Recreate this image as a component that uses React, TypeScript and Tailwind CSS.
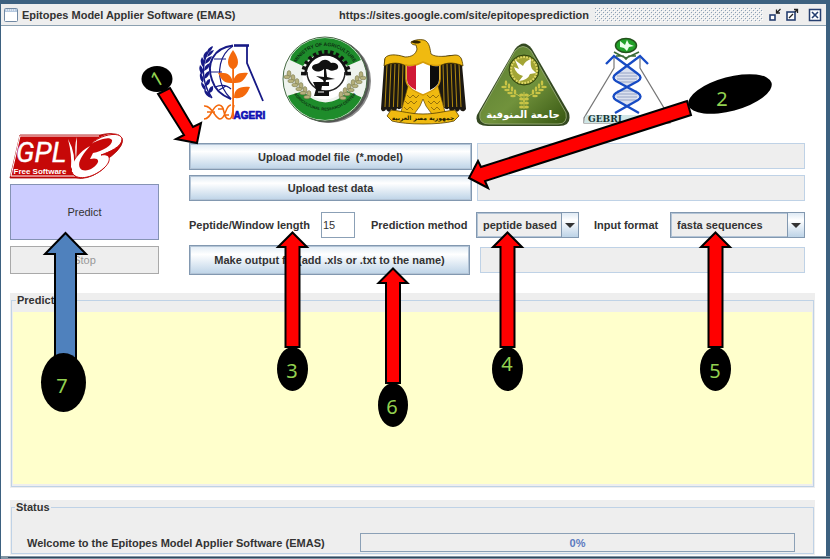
import type { ReactNode } from "react";

const navy = "#171a86";

function AgeriLogo() {
  return (
    <svg viewBox="198 36 70 92" className="h-[92px] w-[70px] shrink-0" aria-label="AGERI logo">
      <g fill="none" stroke={navy} strokeWidth="1.6">
        <path d="M233 45.5 C213 48 206 64 212 80 C215 90 223 96 231 99" strokeWidth="2" />
        <path d="M233 46 C220 54 216 72 223 88 C226 94 229 97 231 99" strokeWidth="1.2" />
        <path d="M214 59 H226 M211 72 H222 M215 87 C222 84 227 85 231 89 M219 90 L226 86" strokeWidth="1.2" />
        <path d="M234 45.5 H249" strokeWidth="2.6" />
        <path d="M247 46 V63 L263 101" strokeWidth="1.8" />
        <path d="M212 47 C200 60 201 82 212 98" strokeWidth="1.4" />
      </g>
      <g fill={navy}>
        <path d="M207 53 Q207 48 213 46 Q212 51 207 53Z M204 60 Q202 54 207 51 Q208 57 204 60Z M203 67 Q199 62 202 57 Q206 62 203 67Z M202 75 Q198 70 200 65 Q205 69 202 75Z M203 83 Q199 79 200 73 Q205 77 203 83Z M206 91 Q201 88 201 82 Q206 85 206 91Z M211 98 Q205 96 204 90 Q210 92 211 98Z" />
        <path d="M207 57 Q212 55 214 50 Q208 51 207 57Z M205 64 Q211 61 212 56 Q205 58 205 64Z M204 71 Q210 68 210 63 Q204 65 204 71Z M204 79 Q210 77 209 71 Q204 73 204 79Z M206 86 Q211 84 210 79 Q205 80 206 86Z M209 93 Q214 92 213 86 Q208 87 209 93Z" />
      </g>
      <g fill="#f4690c">
        <path d="M233 50 C240 60 239 66 234 69 H232 C227 66 226 60 233 50Z" />
        <path d="M233 83 C223 84 221 78 218 73 C227 72 232 75 233 83Z M233 83 C243 84 245 78 248 73 C238 72 234 75 233 83Z" />
        <path d="M234 98 C234 89 239 86 250 87 C247 94 244 99 234 98Z" />
        <path d="M232.200 68 H234 V119 H232.200Z" />
      </g>
      <path d="M204 119 C212 119 212 105 219 105 C226 105 222 119 229 119 C233 119 232 112 234 105 M204 106 C212 105 215 119 220 119 C226 119 225 105 231 105 M207 112 H215 M218 109 H224 M224 115 H229" fill="none" stroke="#f4690c" strokeWidth="1.5" />
      <text x="233.500" y="119" fontSize="10" fontWeight="900" fill="#1010b4" stroke="#1010b4" strokeWidth=".7" fontFamily="Liberation Sans, sans-serif">AGERI</text>
    </svg>
  );
}

function MinistryLogo() {
  const teeth = Array.from({ length: 13 }, (_, i) => Math.PI * (1.02 + (0.96 * i) / 12));
  const grains = [0, 1, 2, 3, 4, 5];
  return (
    <svg viewBox="282 36 92 92" className="h-[92px] w-[92px] shrink-0" aria-label="Ministry of Agriculture logo">
      <defs>
        <clipPath id="disc"><circle cx="325" cy="79" r="41" /></clipPath>
        <path id="arcTop" d="M292 79 A33 33 0 0 1 358 79" />
        <path id="arcLow" d="M288 79 A37.500 37.500 0 0 0 362 79" />
      </defs>
      <circle cx="329" cy="81" r="42" fill="#8b8b8b" />
      <circle cx="327" cy="80" r="42.500" fill="#555" />
      <circle cx="325" cy="79" r="42" fill="#eef3ee" stroke="#476b45" strokeWidth="1" />
      <g clipPath="url(#disc)">
        <path d="M290 60 L300 30 H350 L361 60 L347 66 A26 26 0 0 0 303 66Z" fill="#1e8c2b" />
        <path d="M287 96 L304 91 A26 26 0 0 0 347 91 L363 98 L350 128 H300Z" fill="#1e8c2b" />
      </g>
      <circle cx="325" cy="77" r="22.500" fill="#fff" />
      <g stroke="#111" strokeWidth="3.400">
        {teeth.map((a) => (
          <line key={a} x1={326 + 20 * Math.cos(a)} y1={75 + 20 * Math.sin(a)} x2={326 + 25 * Math.cos(a)} y2={75 + 25 * Math.sin(a)} />
        ))}
      </g>
      <path d="M305.500 75 A20.500 20.500 0 0 1 346.500 75" fill="none" stroke="#111" strokeWidth="2.500" />
      <path d="M307 72 A19 19 0 0 0 345 72" fill="none" stroke="#222" strokeWidth="1.500" />
      <path d="M312 68 C312 63 318 65 320 62 C324 58 329 60 331 63 C338 61 341 69 335 70 C330 72 329 69 326 69 L327 77 L335 79 L326 80 L325 86 L323 80 L316 76 L324 77 L324 69 C319 73 314 72 312 68Z" fill="#111" />
      <path d="M313 82 H329 V86 H322 L321 91 H329 V96 H314 L316 89Z" fill="#111" />
      <path d="M318 92 H324" stroke="#fff" />
      <g fill="#b5b07c" stroke="#6f7048" strokeWidth=".5">
        {grains.map((i) => (
          <g key={i}>
            <ellipse cx={289 + i * 4} cy={74 + i * 4} rx="2" ry="3.400" />
            <ellipse cx={287 + i * 4} cy={77 + i * 4} rx="3.200" ry="1.800" />
            <ellipse cx={361 - i * 4} cy={75 + i * 4} rx="2" ry="3.400" />
            <ellipse cx={363 - i * 4} cy={78 + i * 4} rx="3.200" ry="1.800" />
          </g>
        ))}
      </g>
      <g fontFamily="Liberation Sans, sans-serif" fontWeight="700" fontSize="5" fill="#0d3012">
        <text><textPath href="#arcTop" startOffset="50%" textAnchor="middle">MINISTRY OF AGRICULTURE</textPath></text>
        <text fontSize="4"><textPath href="#arcLow" startOffset="50%" textAnchor="middle">AGRICULTURAL RESEARCH CENTER</textPath></text>
      </g>
    </svg>
  );
}

function EagleLogo() {
  const gold = "#f0ba10";
  const feathers = [0, 1, 2, 3, 4];
  return (
    <svg viewBox="380 36 90 92" className="h-[92px] w-[90px] shrink-0" aria-label="Coat of arms of Egypt">
      <path d="M405 57 C394 54 387 55 384.500 59 L381 109 C382 113 386 111 386 109 C388 113 391 112 391 109 C393 113 397 111 397 108 C399 111 403 108 403 104 L409 91Z" fill="#1c1811" />
      <path d="M441 57 C452 54 459 55 461.500 59 L466 109 C464 113 460 111 460 109 C458 113 455 112 455 109 C453 113 449 111 449 108 C447 111 443 108 443 104 L437 91Z" fill="#1c1811" />
      {feathers.map((i) => (
        <g key={i} stroke={gold} strokeWidth=".7" fill="none">
          <path d={`M${387 + i * 4} 64 L${385 + i * 4.2} 107`} />
          <path d={`M${459 - i * 4} 64 L${461 - i * 4.2} 107`} />
        </g>
      ))}
      <path d="M408 86 L401 112 L412 117 L420 106 L423 99 L426 106 L434 117 L445 112 L438 86Z" fill={gold} stroke="#5e4300" strokeWidth=".7" />
      <g fill="none" stroke="#82600a" strokeWidth=".8">
        <path d="M407 95 l3 3 3-3 3 3 3-3 M405 101 l3 3 3-3 3 3 3-3 M404 107 l3 3 3-3 3 3 M427 95 l3 3 3-3 3 3 3-3 M428 101 l3 3 3-3 3 3 3-3 M431 107 l3 3 3-3 3 3" />
      </g>
      <path d="M385 58 C388 54 396 54 405 57 C412 57 416 54 417 49 L416 45 C413 45 411 44 411 42 C414 40 419 39 424 40 C430 42 430 50 431 54 C436 58 447 56 455 55 C461 55 462 59 463 66 C452 61 444 63 438 67 H408 C400 62 392 62 384 66Z" fill={gold} stroke="#4f3b00" strokeWidth=".8" />
      <path d="M411 42 C413 40 418 40 421 42 C419 44 415 44 411 42Z" fill="#332500" />
      <path d="M406 65 Q414 67 423 62 Q432 67 440 65 V79 C440 88 430 92 423 95 C416 92 406 88 406 79Z" fill="#fff" stroke="#d59c08" strokeWidth="1.500" />
      <path d="M407 66 Q412 67 416 65 V90 C410 87 407 84 407 79Z" fill="#d01936" />
      <path d="M430 65 Q434 67 439 66 V79 C439 84 436 87 430 90Z" fill="#0c0c0c" />
      <path d="M391 110 C402 111 410 114 423 114 C436 114 445 111 455 110 L459 116 L454 121 C440 125 406 125 392 121 L387 116Z" fill={gold} stroke="#574000" strokeWidth=".8" />
      <text x="423" y="120" textAnchor="middle" fontFamily="DejaVu Sans, sans-serif" fontWeight="700" fontSize="6" fill="#221900">جمهورية مصر العربية</text>
    </svg>
  );
}

function MenoufiaLogo() {
  const leaves = [0, 1, 2, 3];
  return (
    <svg viewBox="476 36 96 92" className="h-[92px] w-[96px] shrink-0" aria-label="Menoufia University logo">
      <defs>
        <linearGradient id="olive" x1="0" y1="0" x2="1" y2="1">
          <stop offset="0" stopColor="#587c30" />
          <stop offset=".55" stopColor="#71923c" />
          <stop offset="1" stopColor="#365611" />
        </linearGradient>
      </defs>
      <path d="M515 49 Q524 38 532 49 L569 113 Q572 126 559 126 H488 Q474 126 477 115Z" fill="#344921" />
      <path d="M515 51 Q523 42 531 51 L566 113 Q568 124 558 124 H489 Q478 124 480 113Z" fill="url(#olive)" stroke="#97aa76" strokeWidth=".9" />
      <circle cx="524" cy="70" r="15" fill="#69781a" stroke="#2f410f" />
      <circle cx="524" cy="70" r="13" fill="#a3a536" stroke="#e0d765" strokeWidth="2" strokeDasharray="2 1" />
      <path d="M515 60 L523 66 Q525 61 531 59 Q530 65 532 69 L536 73 L530 74 Q528 80 519 81 L523 76 Q516 74 514 67 L519 69Z" fill="#fff" />
      <g fill="#c9c446">
        {leaves.map((i) => (
          <g key={i}>
            <ellipse cx={506 + i * 3} cy={83 + i * 3} rx="1.300" ry="2.800" />
            <ellipse cx={504 + i * 3} cy={87 + i * 3} rx="2.800" ry="1.300" />
            <ellipse cx={542 - i * 3} cy={83 + i * 3} rx="1.300" ry="2.800" />
            <ellipse cx={544 - i * 3} cy={87 + i * 3} rx="2.800" ry="1.300" />
            <ellipse cx="521.500" cy={95 + i * 4} rx="2.400" ry="1.500" />
            <ellipse cx="526.500" cy={95 + i * 4} rx="2.400" ry="1.500" />
          </g>
        ))}
      </g>
      <path d="M524 92 V109 M514 93 Q523 97 524 102 Q525 97 534 93" stroke="#c9c446" fill="none" />
      <text x="523" y="118" textAnchor="middle" fontFamily="DejaVu Sans, sans-serif" fontWeight="700" fontSize="10" fill="#fff">جامعة المنوفية</text>
    </svg>
  );
}

function GebriLogo() {
  const rungs = [0, 1, 2, 3];
  return (
    <svg viewBox="578 36 95 92" className="h-[92px] w-[95px] shrink-0" aria-label="GEBRI logo">
      <path d="M614 58 V68 L584 118 V123 H670 V118 L640 68 V58" fill="#fff" stroke="#777" strokeWidth="1.200" />
      <path d="M586 115 H668 L670 123 H584Z" fill="#cfe6e6" />
      <path d="M627 67 L640 77 L627 87 L614 77Z M627 87 L640 96 L627 106 L614 96Z" fill="#dbe1ef" />
      <g stroke="#8e9dc0" strokeWidth=".9">
        {rungs.map((i) => (
          <path key={i} d={`M617 ${73 + i * 3} H637 M617 ${91 + i * 3} H637`} />
        ))}
      </g>
      <path d="M606 64 L614 56 L638 74 Q643 77.500 638 81 L616 93 Q611 96.500 616 100 L639 113 M648 64 L640 56 L616 74 Q611 77.500 616 81 L638 93 Q643 96.500 638 100 L615 113" fill="none" stroke="#174bc4" strokeWidth="2.400" />
      <ellipse cx="626" cy="45.500" rx="10.500" ry="7" fill="#21a128" stroke="#24521d" strokeWidth="1.500" />
      <path d="M620 41 L625 45 L627 40 L629 44 L634 46 L629 47 L627 51 L624 48 L620 47Z" fill="#eaffea" />
      <path d="M614 52 Q619 55 626 58 Q633 55 639 52 M616 56 L623 56 L626 59 L629 56 L636 56" fill="none" stroke="#3a6a36" strokeWidth="1.600" />
      <text x="588" y="122" fontFamily="DejaVu Serif, serif" fontWeight="700" fontSize="9" fill="#173535">GEBRI</text>
    </svg>
  );
}

function GplLogo() {
  return (
    <svg viewBox="8 130 118 50" className="-ml-0.5 h-[50px] w-[118px]" aria-label="GPL v3 Free Software">
      <path d="M20 134 H100 Q112 131 119 134 Q127 139 117 150 Q111 156 107 158 Q109 165 99 171 Q87 179 76 177 H10Z" fill="#c60808" stroke="#a40000" strokeWidth=".8" />
      <path d="M20 135 H99 M20 135 L11 175 H75" fill="none" stroke="#fff" strokeWidth="1" />
      <text x="16" y="161" fontFamily="Roboto, sans-serif" fontStyle="italic" fontWeight="400" fontSize="28" fill="#fff" stroke="#fff" strokeWidth=".4">GPL</text>
      <path d="M68 138 Q72 154 71 166 L73 170 Q77 154 68 138Z M77 136 Q74 145 76 159 Q77 148 77 136Z" fill="#fff" />
      <path d="M91 143 C101 132 121 129 122 138 C122 146 109 151 101 154 C112 152 111 161 104 167 C92 178 75 180 72 171 C71 161 79 151 90 145 C82 154 77 162 80 167 C84 173 96 167 98 161 C99 157 94 157 90 158 L93 152 C103 150 113 144 112 139 C109 135 99 139 91 143Z" fill="#fff" />
      <path d="M91 143 C101 133 121 130 122 138 C122 146 109 151 101 154 C112 152 111 161 104 167 C92 178 75 180 72 171" fill="none" stroke="#c60808" strokeWidth="1" />
      <text x="13.500" y="173" fontFamily="Liberation Sans, sans-serif" fontWeight="700" fontSize="8" fill="#fff">Free Software</text>
    </svg>
  );
}

function SteelButton({ children, className }: { children: ReactNode; className: string }) {
  return (
    <button className={`shrink-0 border border-[#8298b0] bg-linear-to-b from-[#dfeaf4] via-white via-30% to-[#bdd3e7] whitespace-pre shadow-[inset_0_0_0_1px_#b3c4d6] ${className}`}>
      {children}
    </button>
  );
}

function Field({ label }: { label: string }) {
  return <input aria-label={label} readOnly className="h-[26px] min-w-0 flex-1 border border-[#bfd2e6] bg-[#eeeeee] px-1 outline-none" />;
}

function Combo({ id, value, className }: { id: string; value: string; className: string }) {
  return (
    <div className={`relative flex h-[26px] border border-[#8298b0] bg-[#eeeeee] shadow-[inset_0_0_0_1px_#b3c4d6] ${className}`}>
      <select id={id} className="min-w-0 flex-1 appearance-none pl-[6px] outline-none">
        <option>{value}</option>
      </select>
      <span className="pointer-events-none absolute inset-y-0 right-0 flex w-[17px] items-center justify-center border-l border-[#8298b0] bg-linear-to-b from-[#dfeaf4] via-white via-30% to-[#bdd3e7]">
        <svg viewBox="0 0 10 5" className="h-[5px] w-[10px] shrink-0"><path d="M0 0 H10 L5 5Z" fill="#333" /></svg>
      </span>
    </div>
  );
}

function TitleBar() {
  return (
    <header className="flex h-[22px] items-center border-b border-[#8ba0b0] bg-[#eeeeee] pr-1 pl-[3px]">
      <svg viewBox="0 0 14 14" className="size-[14px] shrink-0">
        <rect x=".5" y=".5" width="13" height="13" rx="1" fill="#fff" stroke="#7189a3" />
        <path d="M1 1 H13 V4 H1Z" fill="#b6c9df" />
        <path d="M2 2 H12" stroke="#fff" strokeDasharray="1 1" />
      </svg>
      <h1 className="ml-1 w-[317px] shrink-0">Epitopes Model Applier Software (EMAS)</h1>
      <span className="shrink-0">https://sites.google.com/site/epitopesprediction</span>
      <svg className="mx-[6px] h-[14px] min-w-0 flex-1" aria-hidden="true">
        <defs>
          <pattern id="grip" width="4" height="4" patternUnits="userSpaceOnUse">
            <path d="M0 0h1v1h-1z M2 2h1v1h-1z" fill="#8ba0b6" />
            <path d="M1 1h1v1h-1z M3 3h1v1h-1z" fill="#fff" />
          </pattern>
        </defs>
        <rect width="100%" height="14" fill="url(#grip)" />
      </svg>
      <div className="flex items-center gap-[5px]">
        <button aria-label="Minimize">
          <svg viewBox="0 0 12 14" className="h-[14px] w-3">
            <rect x="1" y="7" width="5" height="5" fill="#fff" stroke="#263f70" strokeWidth="1.600" />
            <path d="M11.500 1 L8 4.500 M7.500 1.500 V5 H11" fill="none" stroke="#222" strokeWidth="1.300" />
          </svg>
        </button>
        <button aria-label="Maximize">
          <svg viewBox="0 0 13 14" className="h-[14px] w-[13px]">
            <rect x="1" y="4" width="8" height="8" fill="#fff" stroke="#263f70" strokeWidth="1.600" />
            <path d="M3 10 L7 6 M8 1.500 H11.500 V5 M9 4 L11.500 1.500" fill="none" stroke="#222" strokeWidth="1.300" />
          </svg>
        </button>
        <button aria-label="Close" className="ml-1">
          <svg viewBox="0 0 14 14" className="size-[14px]">
            <rect x="1.500" y="1.500" width="11" height="11" fill="#fff" stroke="#263f70" strokeWidth="1.500" />
            <path d="M4 4 L10 10 M10 4 L4 10" stroke="#263f70" strokeWidth="1.600" />
          </svg>
        </button>
      </div>
    </header>
  );
}

type Callout = { n: number; arrow: string; fill: string; cx: number; cy: number; rx: number; ry: number; tilt: number; tx: number; ty: number };

const upArrow = (x: number, top: number, bottom: number) =>
  `${x},${top} ${x + 14.5},${top + 14.5} ${x + 7},${top + 14.5} ${x + 7},${bottom} ${x - 7},${bottom} ${x - 7},${top + 14.5} ${x - 14.5},${top + 14.5}`;

const callouts: Callout[] = [
  { n: 1, arrow: "158,94 170,88 193,127 201,123 197,143 176,139 184,135", fill: "#ff0000", cx: 157, cy: 79, rx: 15.5, ry: 13, tilt: -30, tx: 157, ty: 86 },
  { n: 2, arrow: "687,101 691,115 485,181 488,188 469,178 478,161 481,167", fill: "#ff0000", cx: 730, cy: 94, rx: 43, ry: 17, tilt: -15, tx: 722, ty: 106 },
  { n: 3, arrow: upArrow(292.5, 232.5, 347), fill: "#ff0000", cx: 292.5, cy: 369, rx: 15.5, ry: 22, tilt: 0, tx: 292, ty: 378 },
  { n: 4, arrow: upArrow(507.5, 232.5, 347), fill: "#ff0000", cx: 507.5, cy: 369, rx: 15.5, ry: 22, tilt: 0, tx: 507, ty: 371 },
  { n: 5, arrow: upArrow(715.5, 232.5, 347), fill: "#ff0000", cx: 715.5, cy: 369, rx: 15.5, ry: 22, tilt: 0, tx: 715, ty: 378 },
  { n: 6, arrow: upArrow(393, 268.5, 383), fill: "#ff0000", cx: 393, cy: 405, rx: 15, ry: 22, tilt: 0, tx: 392, ty: 414 },
  { n: 7, arrow: "65.5,233 86,254 76,254 76,370 55,370 55,254 45,254", fill: "#4f81bd", cx: 63.5, cy: 382.5, rx: 22.5, ry: 29.5, tilt: 0, tx: 62, ty: 393 },
];

function Annotations() {
  return (
    <svg viewBox="0 0 830 559" className="pointer-events-none absolute top-0 left-0 h-[559px] w-[830px]">
      {callouts.map((c) => (
        <g key={c.n}>
          <polygon points={c.arrow} fill={c.fill} stroke="#000" strokeWidth="2" />
          <ellipse cx={c.cx} cy={c.cy} rx={c.rx} ry={c.ry} fill="#000" transform={c.n === 2 ? `rotate(${c.tilt} ${c.cx} ${c.cy})` : undefined} />
          <text x={c.tx} y={c.ty} textAnchor="middle" fontFamily="Noto Sans, sans-serif" fontWeight="400" fontSize="20" fill="#92d050" transform={c.n === 1 ? `rotate(${c.tilt} ${c.cx} ${c.cy})` : undefined}>
            {c.n}
          </text>
        </g>
      ))}
    </svg>
  );
}

export default function App() {
  return (
    <div className="relative flex min-h-screen flex-col overflow-hidden bg-[#3d6180] pt-1 pr-1 pl-px font-['Liberation_Sans',Arial,sans-serif] text-[11px] leading-[14px] font-bold text-[#333333]">
      <TitleBar />
      <main className="flex flex-1 flex-col bg-white pt-2 pr-[11px] pl-[9px]">
        <div className="flex gap-[30px] pr-[10px]">
          <div className="flex w-[149px] shrink-0 flex-col pt-[97px]">
            <GplLogo />
            <button className="mt-[3px] h-[56px] border border-[#8593b4] bg-[#ccccff] font-normal">Predict</button>
            <button disabled className="mt-[6px] h-[28px] border border-[#a9a9a9] bg-[#eeeeee] font-normal text-[#999999]">Stop</button>
          </div>
          <div className="flex min-w-0 flex-1 flex-col">
            <div className="flex h-[109px] items-start gap-[14px] pt-[2px] pl-[9px]">
              <AgeriLogo />
              <MinistryLogo />
              <div className="-ml-2 flex gap-[6px]">
                <EagleLogo />
                <MenoufiaLogo />
                <GebriLogo />
              </div>
            </div>
            <div className="flex flex-col gap-[5px]">
              <div className="flex gap-[5px]">
                <SteelButton className="h-[27px] w-[283px]">{"Upload model file  (*.model)"}</SteelButton>
                <Field label="Model file" />
              </div>
              <div className="flex gap-[5px]">
                <SteelButton className="h-[26px] w-[283px]">Upload test data</SteelButton>
                <Field label="Test data" />
              </div>
            </div>
            <div className="mt-[11px] flex items-center">
              <label htmlFor="length" className="w-[132px] shrink-0 whitespace-nowrap">Peptide/Window length</label>
              <input id="length" defaultValue="15" className="h-[26px] w-[34px] border border-[#8ba0b6] bg-white pl-px font-normal" />
              <label htmlFor="method" className="ml-[16px] w-[105px] shrink-0 whitespace-nowrap">Prediction method</label>
              <Combo id="method" value="peptide based" className="w-[103px] shrink-0" />
              <label htmlFor="format" className="ml-[15px] w-[76px] shrink-0 whitespace-nowrap">Input format</label>
              <Combo id="format" value="fasta sequences" className="min-w-0 flex-1" />
            </div>
            <div className="mt-[7px] flex items-center gap-[10px]">
              <SteelButton className="h-[30px] w-[281px]">Make output file(add .xls or .txt to the name)</SteelButton>
              <Field label="Output file" />
            </div>
          </div>
        </div>
        <section className="mt-[18px] flex flex-1 flex-col bg-[#eeeeee] px-px pb-px">
          <fieldset className="flex flex-1 border border-[#bfd2e6] px-px pt-[5px] pb-[2px]">
            <legend className="ml-[3px] px-px">Prediction</legend>
            <textarea aria-label="Prediction results" readOnly className="block min-h-[172px] w-full flex-1 resize-none bg-[#ffffcc] outline-none" />
          </fieldset>
        </section>
        <section className="mt-[12px] mb-px bg-[#eeeeee] px-px pb-px">
          <fieldset className="border border-[#bfd2e6] pr-[18px] pb-px pl-[15px]">
            <legend className="-ml-[12px] px-px">Status</legend>
            <div className="flex items-center pt-[19px]">
              <p className="w-[333px] shrink-0">Welcome to the Epitopes Model Applier Software (EMAS)</p>
              <div role="progressbar" aria-label="Progress" aria-valuenow={0} className="flex h-[19px] flex-1 items-center justify-center border border-[#8ba0b6] text-[#5c7bc0]">0%</div>
            </div>
          </fieldset>
        </section>
      </main>
      <footer className="-mr-1 h-1 border-t border-[#8296a5] bg-[#8296a5]">
        <div className="ml-[7px] h-px bg-[#31485e]" />
      </footer>
      <Annotations />
    </div>
  );
}
